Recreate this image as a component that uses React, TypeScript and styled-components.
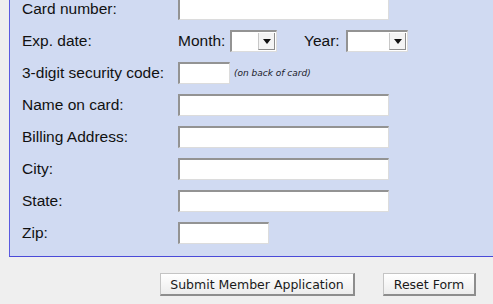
import React from "react";
import styled, { createGlobalStyle } from "styled-components";

const GlobalStyle = createGlobalStyle`
  html, body {
    margin: 0;
    padding: 0;
    background: #efefef;
    overflow: hidden;
  }
  body {
    font-family: "Liberation Sans", Arial, sans-serif;
  }
`;

type Field = { label: string; width: number };

const fieldsAfter: Field[] = [
  { label: "Name on card:", width: 211 },
  { label: "Billing Address:", width: 211 },
  { label: "City:", width: 211 },
  { label: "State:", width: 211 },
  { label: "Zip:", width: 91 },
];

function Select({ width }: { width: number }) {
  return (
    <SelectBox $width={width}>
      <SelectField />
      <ArrowButton>
        <svg width="8" height="5" viewBox="0 0 8 5">
          <path d="M0 0 L8 0 L4 5 Z" fill="#111" />
        </svg>
      </ArrowButton>
    </SelectBox>
  );
}

export default function App() {
  return (
    <Page>
      <GlobalStyle />
      <Panel>
        <Row>
          <Label>Card number:</Label>
          <TextInput $width={211} />
        </Row>
        <Row>
          <Label>Exp. date:</Label>
          <Inline>
            <SubLabel $width={52}>Month:</SubLabel>
            <Select width={47} />
            <SubLabel $width={42} $gap={27}>Year:</SubLabel>
            <Select width={62} />
          </Inline>
        </Row>
        <Row>
          <Label>3-digit security code:</Label>
          <Inline>
            <TextInput $width={52} />
            <Note>(on back of card)</Note>
          </Inline>
        </Row>
        {fieldsAfter.map((f) => (
          <Row key={f.label}>
            <Label>{f.label}</Label>
            <TextInput $width={f.width} />
          </Row>
        ))}
      </Panel>
      <Actions>
        <Button $width={195}>Submit Member Application</Button>
        <Button $width={93}>Reset Form</Button>
      </Actions>
    </Page>
  );
}

const Page = styled.div`
  width: 493px;
  height: 304px;
  overflow: hidden;
`;

const Panel = styled.div`
  margin: -7px -20px 0 9px;
  padding: 0 0 7px 12px;
  background: #d0daf2;
  border-left: 1px solid #5b5be0;
  border-bottom: 1px solid #4a4ad8;
  display: flex;
  flex-direction: column;
`;

const Row = styled.div`
  display: grid;
  grid-template-columns: 156px auto;
  align-items: center;
  height: 32px;
`;

const Label = styled.div`
  font-size: 15.5px;
  color: #111;
  white-space: nowrap;
`;

const Inline = styled.div`
  display: flex;
  align-items: center;
`;

const SubLabel = styled.span<{ $gap?: number; $width: number }>`
  width: ${(p) => p.$width}px;
  flex: none;
  font-size: 15.5px;
  color: #111;
  white-space: nowrap;
  margin-left: ${(p) => p.$gap ?? 0}px;
`;

const TextInput = styled.div<{ $width: number }>`
  box-sizing: border-box;
  width: ${(p) => p.$width}px;
  height: 22px;
  background: #fff;
  border-top: 2px solid #939393;
  border-left: 2px solid #939393;
  border-right: 1px solid #dcdcdc;
  border-bottom: 1px solid #dcdcdc;
`;

const SelectBox = styled.div<{ $width: number }>`
  box-sizing: border-box;
  width: ${(p) => p.$width}px;
  height: 22px;
  display: flex;
  background: #fff;
  border-top: 2px solid #939393;
  border-left: 2px solid #939393;
  border-right: 1px solid #dcdcdc;
  border-bottom: 1px solid #dcdcdc;
`;

const SelectField = styled.div`
  flex: 1;
`;

const ArrowButton = styled.div`
  width: 15px;
  display: flex;
  align-items: center;
  justify-content: center;
  background: #f4f4f4;
  border-left: 1px solid #c8c8c8;
  border-right: 1px solid #8c8c8c;
  border-bottom: 1px solid #8c8c8c;
  margin: 1px 1px 1px 0;
`;

const Note = styled.span`
  margin-left: 4px;
  font-size: 9px;
  font-style: italic;
  color: #1a1a2a;
  font-family: Verdana, "DejaVu Sans", sans-serif;
`;

const Actions = styled.div`
  display: flex;
  gap: 28px;
  padding: 16px 0 0 160px;
`;

const Button = styled.button<{ $width: number }>`
  box-sizing: border-box;
  width: ${(p) => p.$width}px;
  height: 23px;
  padding: 0;
  font-family: "DejaVu Sans", Verdana, sans-serif;
  font-size: 12.5px;
  color: #1a1a1a;
  background: linear-gradient(#ffffff, #ececec);
  border-top: 1px solid #c4c4c4;
  border-left: 1px solid #c4c4c4;
  border-right: 2px solid #8d8d8d;
  border-bottom: 2px solid #8d8d8d;
  border-radius: 0;
`;
